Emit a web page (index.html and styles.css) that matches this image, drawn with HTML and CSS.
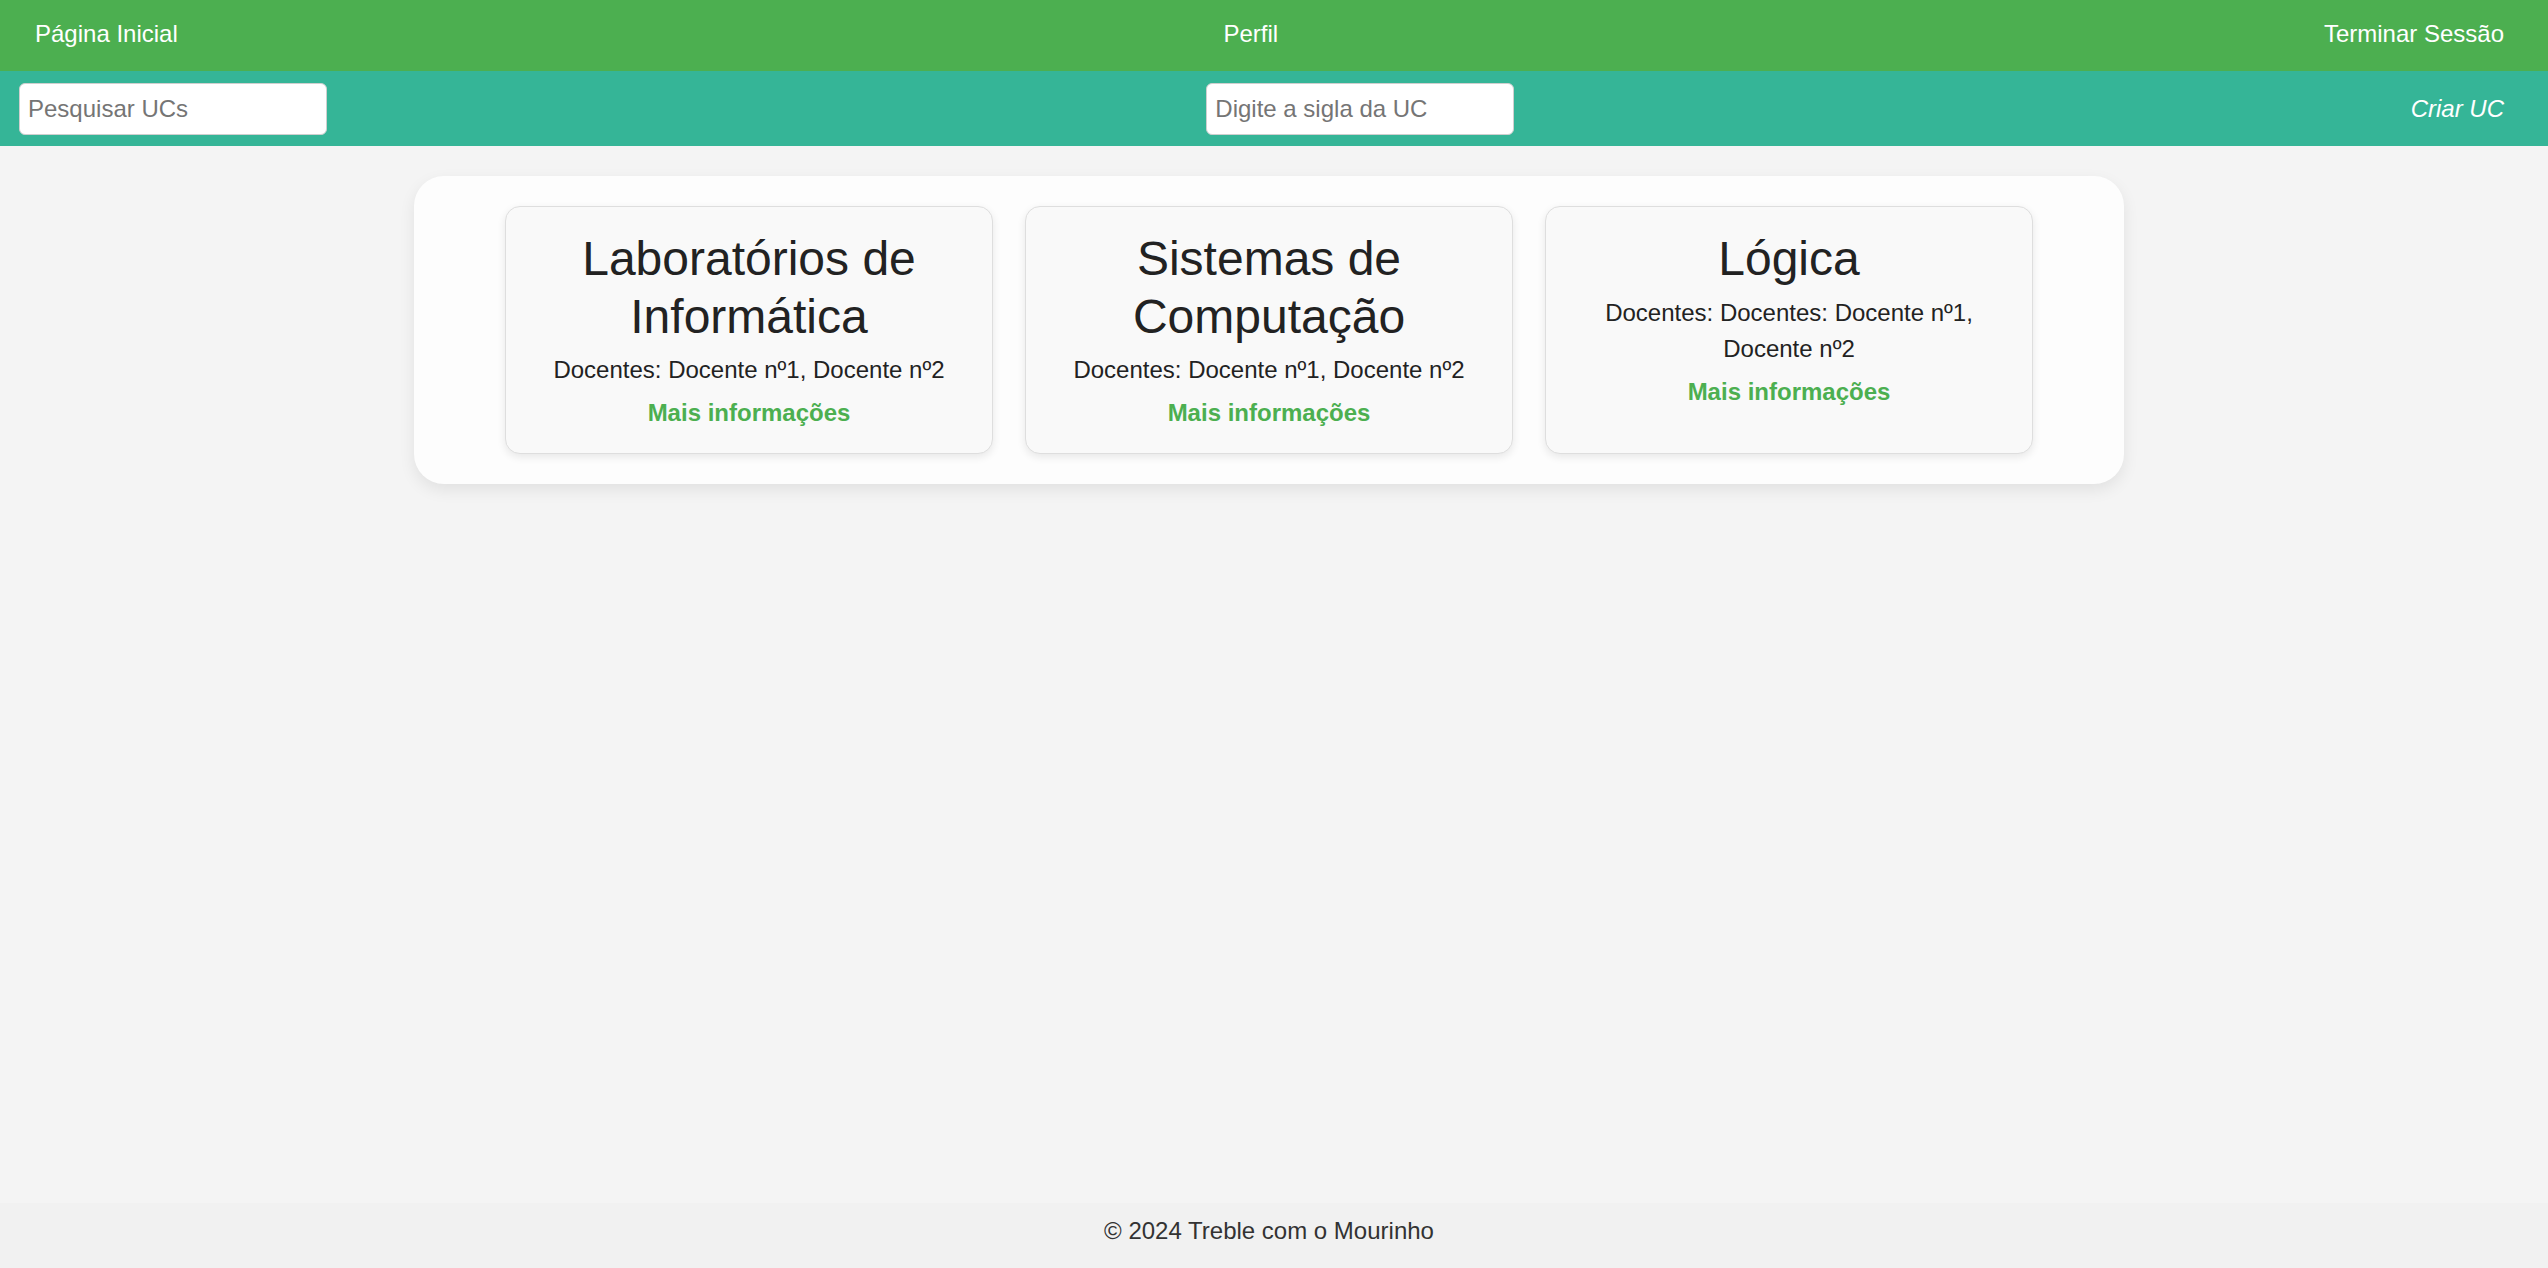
FILE: index.html
```html
<!DOCTYPE html>
<html lang="pt">
<head>
<meta charset="utf-8">
<title>UCs</title>
<link rel="stylesheet" href="styles.css">
</head>
<body>
<header class="header">
  <nav class="topnav">
    <a class="nav-link" href="#">Página Inicial</a>
    <a class="nav-link" href="#">Perfil</a>
    <a class="nav-link" href="#">Terminar Sessão</a>
  </nav>
  <div class="toolbar">
    <input class="field" type="text" placeholder="Pesquisar UCs">
    <input class="field" type="text" placeholder="Digite a sigla da UC">
    <a class="create-link" href="#">Criar UC</a>
  </div>
</header>
<main class="main">
  <section class="panel">
    <article class="card">
      <h2 class="card-title">Laboratórios de Informática</h2>
      <p class="card-text">Docentes: Docente nº1, Docente nº2</p>
      <a class="card-link" href="#">Mais informações</a>
    </article>
    <article class="card">
      <h2 class="card-title">Sistemas de Computação</h2>
      <p class="card-text">Docentes: Docente nº1, Docente nº2</p>
      <a class="card-link" href="#">Mais informações</a>
    </article>
    <article class="card">
      <h2 class="card-title">Lógica</h2>
      <p class="card-text">Docentes: Docentes: Docente nº1, Docente nº2</p>
      <a class="card-link" href="#">Mais informações</a>
    </article>
  </section>
</main>
<footer class="footer">
  <p class="footer-text">© 2024 Treble com o Mourinho</p>
</footer>
</body>
</html>
```
FILE: styles.css
```css
* {
  box-sizing: border-box;
}

html, body {
  margin: 0;
  padding: 0;
}

body {
  min-height: 100vh;
  display: flex;
  flex-direction: column;
  background: #f4f4f4;
  font-family: "Liberation Sans", Arial, sans-serif;
  font-size: 24px;
  color: #222;
}

.topnav {
  height: 71px;
  background: #4caf50;
  display: flex;
  justify-content: space-between;
  align-items: center;
  padding: 0 27px 4px 18px;
}

.nav-link {
  color: #fff;
  text-decoration: none;
  padding: 0 17px;
  line-height: 1.15;
}

.toolbar {
  height: 75px;
  background: #35b597;
  display: flex;
  justify-content: space-between;
  align-items: center;
  padding: 0 27px 0 19px;
}

.field {
  width: 308px;
  height: 52px;
  padding: 0 8px;
  border: 1px solid #cfcfcf;
  border-radius: 6px;
  background: #fff;
  font-family: "Liberation Sans", Arial, sans-serif;
  font-size: 24px;
  color: #222;
  outline: none;
}

.field::placeholder {
  color: #757575;
}

.create-link {
  color: #fff;
  font-style: italic;
  text-decoration: none;
  padding: 0 17px;
}

.main {
  flex: 1;
  padding: 30px 10px 0 0;
}

.panel {
  width: 1710px;
  margin: 0 auto;
  padding: 30px 91px;
  background: #fdfdfd;
  border-radius: 30px;
  box-shadow: 0 6px 16px rgba(0, 0, 0, 0.08);
  display: flex;
  justify-content: center;
  gap: 32px;
}

.card {
  flex: 0 0 488px;
  height: 248px;
  padding: 23px 24px;
  background: #f9f9f9;
  border: 1px solid #dedede;
  border-radius: 15px;
  box-shadow: 0 3px 8px rgba(0, 0, 0, 0.09);
  text-align: center;
  display: flex;
  flex-direction: column;
  align-items: center;
}

.card-title {
  margin: 0 0 7px;
  font-size: 48px;
  font-weight: normal;
  line-height: 57.6px;
  color: #222;
}

.card-text {
  margin: 0 0 11px;
  line-height: 36px;
  color: #222;
}

.card-link {
  color: #4caf50;
  font-weight: bold;
  text-decoration: none;
  line-height: 1.15;
}

.footer {
  height: 65px;
  background: #f1f1f1;
  display: flex;
  align-items: center;
  justify-content: center;
  padding: 0 10px 9px 0;
}

.footer-text {
  margin: 0;
  color: #333;
  line-height: 1.15;
}
```
